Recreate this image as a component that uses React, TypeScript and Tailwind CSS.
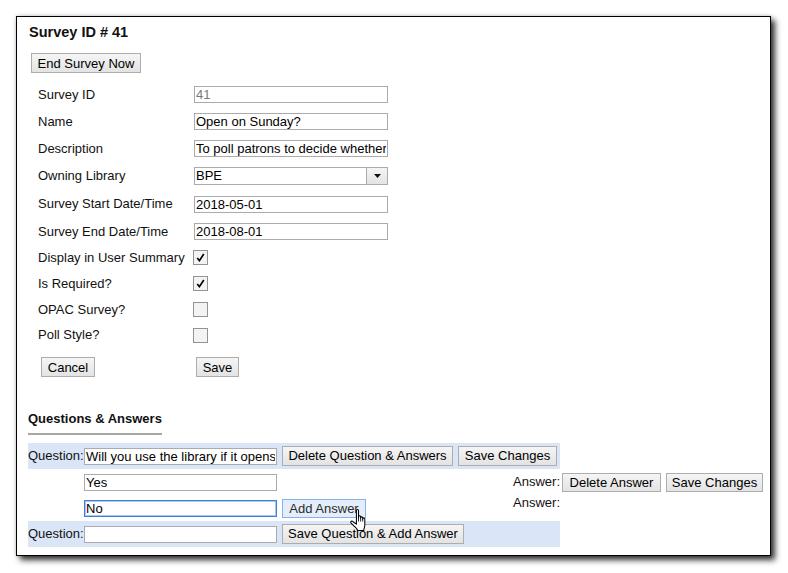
import React from "react";

function Btn({ label, className = "", hover = false }: { label: string; className?: string; hover?: boolean }) {
  return (
    <button
      type="button"
      className={`flex shrink-0 items-center justify-center border text-[13px] leading-none ${
        hover
          ? "border-[#85b3e6] bg-[#e3eefa] text-[#2b2b2b]"
          : "border-[#adadad] bg-linear-to-b from-[#f5f5f5] to-[#e3e3e3] text-black"
      } ${className}`}
    >
      {label}
    </button>
  );
}

function TextBox({
  value,
  className = "",
  focused = false,
  disabled = false,
}: {
  value: string;
  className?: string;
  focused?: boolean;
  disabled?: boolean;
}) {
  return (
    <input
      readOnly
      value={value}
      className={`h-[17px] shrink-0 border bg-white px-[1px] text-[13px] leading-none outline-none ${
        focused ? "border-[#3d7fd6] shadow-[inset_0_0_0_1px_#a9c8ef]" : "border-[#ababab]"
      } ${disabled ? "text-[#7a7a7a]" : "text-black"} ${className}`}
    />
  );
}

function Check({ checked }: { checked: boolean }) {
  return (
    <span className="-ml-px flex h-[15px] w-[15px] items-center justify-center border border-[#939393] bg-[#f3f3f3]">
      {checked && (
        <svg width="13" height="13" viewBox="0 0 13 13">
          <path d="M3.2 7 L5.4 9.6 L9.8 3" fill="none" stroke="#000" strokeWidth="1.7" />
        </svg>
      )}
    </span>
  );
}

const rows: { label: string; h: string; kind: "text" | "select" | "check"; value?: string; checked?: boolean; disabled?: boolean }[] = [
  { label: "Survey ID", h: "h-[27px]", kind: "text", value: "41", disabled: true },
  { label: "Name", h: "h-[27px]", kind: "text", value: "Open on Sunday?" },
  { label: "Description", h: "h-[27px]", kind: "text", value: "To poll patrons to decide whether the library should open on Sundays" },
  { label: "Owning Library", h: "h-[28px]", kind: "select", value: "BPE" },
  { label: "Survey Start Date/Time", h: "h-[28px]", kind: "text", value: "2018-05-01" },
  { label: "Survey End Date/Time", h: "h-[27px]", kind: "text", value: "2018-08-01" },
  { label: "Display in User Summary", h: "h-[25px]", kind: "check", checked: true },
  { label: "Is Required?", h: "h-[27px]", kind: "check", checked: true },
  { label: "OPAC Survey?", h: "h-[25px]", kind: "check", checked: false },
  { label: "Poll Style?", h: "h-[26px]", kind: "check", checked: false },
];

export default function App() {
  return (
    <div className="min-h-screen bg-white pl-4 pt-4 font-['Liberation_Sans',Arial,sans-serif] text-[#111]">
      <div className="relative h-[540px] w-[755px] border border-black bg-white pl-[11px] pt-[6px] shadow-[4px_4px_6px_rgba(0,0,0,0.8),0_0_4px_rgba(0,0,0,0.2)]">
        <h1 className="ml-px text-[14.5px] font-bold leading-[18px]">Survey ID # 41</h1>
        <Btn label="End Survey Now" className="ml-[3px] mt-[12px] h-[20px] w-[110px]" />

        <div className="ml-[10px] mt-[8px]">
          {rows.map((r) => (
            <div key={r.label} className={`flex items-center ${r.h}`}>
              <span className="w-[156px] shrink-0 text-[13px] leading-4">{r.label}</span>
              {r.kind === "text" && <TextBox value={r.value ?? ""} disabled={r.disabled} className="w-[194px]" />}
              {r.kind === "select" && (
                <div className="flex h-[18px] w-[194px] border border-[#ababab] bg-white">
                  <span className="flex-1 pl-[1px] text-[13px] leading-4 text-black">{r.value}</span>
                  <span className="flex w-[21px] items-center justify-center border-l border-[#ababab] bg-linear-to-b from-[#f5f5f5] to-[#e3e3e3]">
                    <svg width="7" height="4" viewBox="0 0 7 4">
                      <path d="M0 0 H7 L3.5 4 Z" fill="#111" />
                    </svg>
                  </span>
                </div>
              )}
              {r.kind === "check" && <Check checked={!!r.checked} />}
            </div>
          ))}
          <div className="flex h-[38px] items-center">
            <div className="w-[156px] shrink-0">
              <Btn label="Cancel" className="ml-[3px] h-[20px] w-[54px]" />
            </div>
            <Btn label="Save" className="ml-[2px] h-[20px] w-[43px]" />
          </div>
        </div>

        <div className="mt-[25px] flex">
          <h2 className="border-b-2 border-[#a6a6a6] pb-[6px] text-[13px] font-bold leading-4">Questions &amp; Answers</h2>
        </div>

        <div className="mt-[8px] text-[13px] leading-4">
          <div className="flex h-[26px] w-[532px] items-center bg-[#dae6f7]">
            <span className="w-[56px] shrink-0">Question:</span>
            <TextBox value="Will you use the library if it opens on Sunday?" className="w-[193px]" />
            <Btn label="Delete Question & Answers" className="ml-[5px] mb-px h-[20px] w-[171px]" />
            <Btn label="Save Changes" className="ml-[5px] mb-px h-[20px] w-[99px]" />
          </div>

          <div className="flex h-[26px] items-center">
            <div className="flex w-[532px] items-center">
              <span className="w-[56px] shrink-0" />
              <TextBox value="Yes" className="w-[193px]" />
              <span className="flex-1 text-right">Answer:</span>
            </div>
            <Btn label="Delete Answer" className="ml-[2px] h-[19px] w-[99px]" />
            <Btn label="Save Changes" className="ml-[5px] h-[19px] w-[97px]" />
          </div>

          <div className="flex h-[26px] items-center">
            <div className="flex h-full w-[532px] items-center">
              <span className="w-[56px] shrink-0" />
              <TextBox value="No" focused className="w-[193px]" />
              <Btn label="Add Answer" hover className="ml-[5px] h-[19px] w-[84px]" />
              <span className="flex-1 self-start text-right">Answer:</span>
            </div>
          </div>

          <div className="flex h-[26px] w-[532px] items-center bg-[#dae6f7]">
            <span className="w-[56px] shrink-0">Question:</span>
            <TextBox value="" className="w-[193px]" />
            <Btn label="Save Question & Add Answer" className="ml-[5px] mb-px h-[20px] w-[182px]" />
          </div>
        </div>

        <svg
          className="absolute left-[332px] top-[492px]"
          width="18"
          height="22"
          viewBox="0 0 16 21"
        >
          <path
            d="M6.5 1.5 C6.5 0.7 7.1 0.5 7.5 0.5 C7.9 0.5 8.5 0.7 8.5 1.5 L8.5 8.5 L8.5 7.5 C8.5 6.8 9 6.5 9.5 6.5 C10 6.5 10.5 6.8 10.5 7.5 L10.5 8.5 C10.5 7.8 11 7.5 11.5 7.5 C12 7.5 12.5 7.8 12.5 8.5 L12.5 9.5 C12.5 8.8 13 8.5 13.5 8.5 C14 8.5 14.5 8.8 14.5 9.5 L14.5 15.5 C14.5 17.5 13.5 18.5 13.5 20.5 L7.5 20.5 C7.5 19 5.5 17.5 4.5 16.5 L1.5 13.5 C0.8 12.8 1 11.5 2 11.5 C2.6 11.5 3.2 12 3.8 12.6 L6.5 14.5 Z"
            fill="#fff"
            stroke="#000"
            strokeWidth="1"
            strokeLinejoin="round"
          />
          <path d="M8.5 8.5 V12 M10.5 8.5 V12 M12.5 9.5 V12" stroke="#000" strokeWidth="0.8" />
        </svg>
      </div>
    </div>
  );
}
